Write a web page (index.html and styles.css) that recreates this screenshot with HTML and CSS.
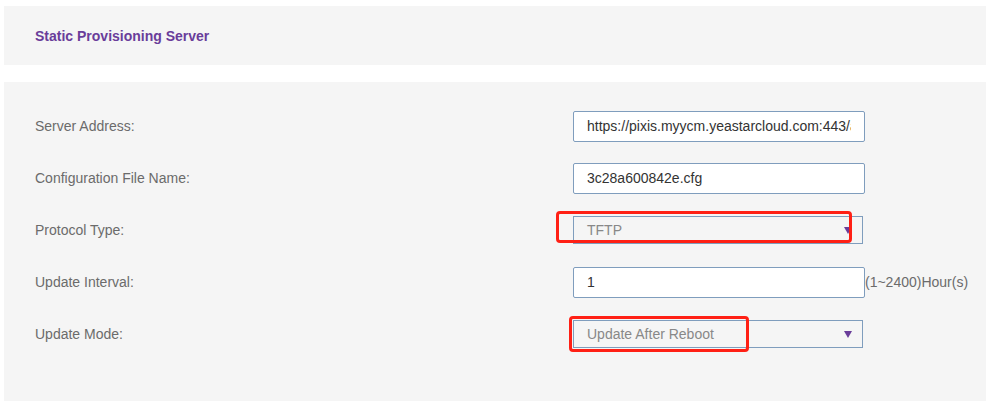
FILE: index.html
```html
<!doctype html>
<html>
    <head>
        <title>Static Provisioning Server</title>
        <link rel="stylesheet" href="styles.css">
    </head>
    <body>
        <div class="panel-head">
            <h3>Static Provisioning Server</h3>
        </div>
        <div class="panel-body">
            <div class="row">
                <label>Server Address:</label>
                <div class="field">
                    <input class="text" value="https://pixis.myycm.yeastarcloud.com:443/api/provisioning">
                </div>
            </div>
            <div class="row">
                <label>Configuration File Name:</label>
                <div class="field">
                    <input class="text" value="3c28a600842e.cfg">
                </div>
            </div>
            <div class="row">
                <label>Protocol Type:</label>
                <div class="field">
                    <div class="select">TFTP<span class="arrow"></span></div>
                    <span class="mark mark-protocol"></span>
                </div>
            </div>
            <div class="row">
                <label>Update Interval:</label>
                <div class="field">
                    <input class="text" value="1">
                    <span class="unit">(1~2400)Hour(s)</span>
                </div>
            </div>
            <div class="row">
                <label>Update Mode:</label>
                <div class="field">
                    <div class="select">Update After Reboot<span class="arrow"></span></div>
                    <span class="mark mark-mode"></span>
                </div>
            </div>
        </div>
    </body>
</html>
```

FILE: styles.css
```css
body {
    background-color: #fff;
    font-family: "Liberation Sans", Arial, sans-serif;
    margin: 0;
    padding: 6px 0 0 4px;
}
.panel-head {
    background-color: #f5f5f5;
    height: 59px;
    display: flex;
    align-items: center;
    padding-left: 31px;
}
.panel-head h3 {
    margin: 0;
    font-size: 14px;
    font-weight: bold;
    color: #6a3d9a;
}
.panel-body {
    background-color: #f5f5f5;
    margin-top: 17px;
    height: 319px;
    box-sizing: border-box;
    padding: 18px 0 0 31px;
}
.row {
    display: flex;
    align-items: center;
    height: 52px;
}
.row label {
    width: 538px;
    font-size: 14px;
    color: #6b6b6b;
}
.field {
    position: relative;
    display: flex;
    align-items: center;
}
.text {
    width: 292px;
    height: 31px;
    box-sizing: border-box;
    border: 1px solid #7f9dbd;
    border-radius: 2px;
    background-color: #fff;
    padding: 0 13px;
    font-family: inherit;
    font-size: 14px;
    color: #333;
    outline: none;
}
.unit {
    font-size: 14px;
    color: #6b6b6b;
}
.select {
    position: relative;
    width: 290px;
    height: 28px;
    box-sizing: border-box;
    border: 1px solid #7f9dbd;
    padding-left: 13px;
    line-height: 26px;
    font-size: 14px;
    color: #888;
}
.arrow {
    position: absolute;
    right: 10px;
    top: 10px;
    border-left: 4px solid transparent;
    border-right: 4px solid transparent;
    border-top: 7px solid #6a3d9a;
}
.mark {
    position: absolute;
    border: 3px solid #ff2015;
    border-radius: 4px;
}
.mark-protocol {
    left: -17px;
    top: -5px;
    width: 290px;
    height: 26px;
}
.mark-mode {
    left: -4px;
    top: -4px;
    width: 174px;
    height: 30px;
}
```
